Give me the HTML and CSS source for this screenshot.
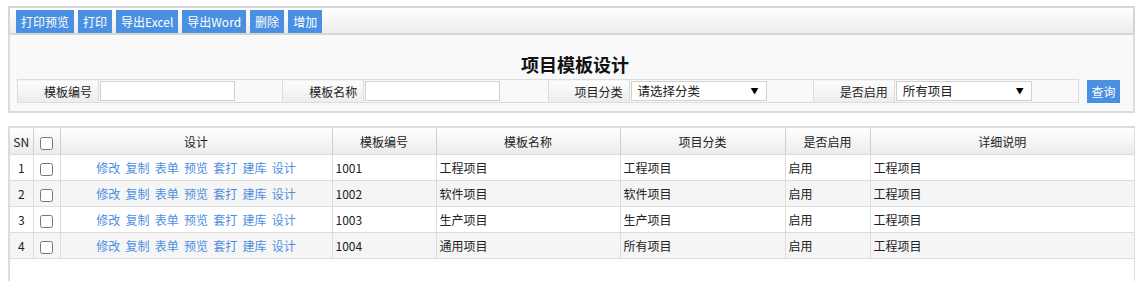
FILE: index.html
```html
<!DOCTYPE html>
<html lang="zh-CN">
<head>
  <meta charset="UTF-8" />
  <title>项目模板设计</title>
  <link rel="stylesheet" href="styles.css">
</head>
<body>

<div class="page">
  <div class="toolbar">
    <button class="tbtn">打印预览</button>
    <button class="tbtn">打印</button>
    <button class="tbtn">导出Excel</button>
    <button class="tbtn">导出Word</button>
    <button class="tbtn">删除</button>
    <button class="tbtn">增加</button>
  </div>

  <div class="search-panel">
    <h1 class="title">项目模板设计</h1>
    <div class="search-row">
      <table class="search-table">
        <tr>
          <td class="lbl">模板编号</td>
          <td class="val"><input type="text" class="txt"></td>
          <td class="lbl">模板名称</td>
          <td class="val"><input type="text" class="txt"></td>
          <td class="lbl">项目分类</td>
          <td class="val"><span class="sel">请选择分类</span></td>
          <td class="lbl">是否启用</td>
          <td class="val"><span class="sel">所有项目</span></td>
        </tr>
      </table>
      <button class="qbtn">查询</button>
    </div>
  </div>

  <div class="grid">
    <table class="grid-table">
      <colgroup>
        <col style="width:23px">
        <col style="width:27px">
        <col style="width:272px">
        <col style="width:104px">
        <col style="width:184px">
        <col style="width:165px">
        <col style="width:85px">
        <col>
      </colgroup>
      <thead>
        <tr>
          <th>SN</th>
          <th><input type="checkbox"></th>
          <th>设计</th>
          <th>模板编号</th>
          <th>模板名称</th>
          <th>项目分类</th>
          <th>是否启用</th>
          <th>详细说明</th>
        </tr>
      </thead>
      <tbody id="rows"></tbody>
    </table>
  </div>
</div>

<script>
  const rows = [
    { no: "1001", name: "工程项目", type: "工程项目", on: "启用", desc: "工程项目" },
    { no: "1002", name: "软件项目", type: "软件项目", on: "启用", desc: "工程项目" },
    { no: "1003", name: "生产项目", type: "生产项目", on: "启用", desc: "工程项目" },
    { no: "1004", name: "通用项目", type: "所有项目", on: "启用", desc: "工程项目" }
  ];
  const actions = ["修改", "复制", "表单", "预览", "套打", "建库", "设计"];

  const tbody = document.getElementById("rows");
  rows.forEach((r, i) => {
    const tr = document.createElement("tr");
    const links = actions.map(a => `<a href="#">${a}</a>`).join(" ");
    tr.innerHTML = `<td class="sn">${i + 1}</td>
      <td class="ck"><input type="checkbox"></td>
      <td class="ops">${links}</td>
      <td>${r.no}</td><td>${r.name}</td><td>${r.type}</td>
      <td>${r.on}</td><td>${r.desc}</td>`;
    tbody.appendChild(tr);
  });
</script>

</body>
</html>
```

FILE: styles.css
```css
body {
  margin: 0;
  font-family: "Noto Sans CJK SC", "Liberation Sans", sans-serif;
  font-size: 12px;
  color: #222;
  background: #fff;
}

.page {
  margin: 6px 0 0 8px;
  width: 1127px;
}

.toolbar {
  display: flex;
  gap: 4px;
  padding: 2px 6px 0;
  border: 2px solid #d6d6d6;
  background: linear-gradient(#ffffff, #ececec);
}

.tbtn {
  height: 23px;
  padding: 0 5px;
  border: none;
  background: #4a90e2;
  color: #fff;
  font-family: inherit;
  font-size: 12px;
  line-height: 23px;
}

.search-panel {
  border: 2px solid #dcdcdc;
  border-top: none;
  background: #f9f9f9;
  padding: 17px 0 8px 7px;
}

.title {
  margin: 0 0 3px;
  text-align: center;
  font-size: 18px;
  line-height: 24px;
  font-weight: bold;
  color: #111;
}

.search-row {
  display: flex;
  align-items: center;
  gap: 8px;
}

.search-table {
  width: 1062px;
  border-collapse: collapse;
  table-layout: fixed;
}

.search-table td {
  height: 22px;
  border: 1px solid #dcdcdc;
  padding: 0;
}

.lbl {
  width: 74px;
  padding-right: 6px !important;
  text-align: right;
  background: linear-gradient(#fdfdfd, #ececec);
  color: #222;
}

.val {
  padding-left: 1px !important;
}

.txt {
  box-sizing: border-box;
  width: 135px;
  height: 20px;
  margin: 0;
  border: 1px solid #d0d0d0;
  background: #fff;
  vertical-align: middle;
}

.sel {
  position: relative;
  display: inline-block;
  box-sizing: border-box;
  width: 136px;
  height: 20px;
  padding-left: 6px;
  border: 1px solid #d0d0d0;
  background: #fff;
  font-size: 12.5px;
  line-height: 18px;
  vertical-align: middle;
}

.sel::after {
  content: "▼";
  position: absolute;
  right: 7px;
  top: 0;
  font-size: 8px;
  color: #000;
}

.qbtn {
  width: 33px;
  height: 23px;
  padding: 0;
  border: none;
  background: #4a90e2;
  color: #fff;
  font-family: inherit;
  font-size: 12px;
}

.grid {
  margin-top: 13px;
  border: 2px solid #dcdcdc;
  border-right-width: 1px;
  min-height: 160px;
}

.grid-table {
  width: 100%;
  border-collapse: collapse;
  table-layout: fixed;
}

.grid-table th {
  height: 26px;
  padding: 0;
  font-weight: normal;
  color: #222;
  background: linear-gradient(#ffffff, #ebebeb);
  border-left: 1px solid #cfcfcf;
  border-bottom: 1px solid #dcdcdc;
}

.grid-table th:first-child {
  border-left: none;
}

.grid-table td {
  height: 25px;
  padding: 0 0 0 3px;
  border: 1px solid #dcdcdc;
  border-top: none;
  white-space: nowrap;
}

.grid-table td:first-child {
  border-left: none;
}

.grid-table td:last-child {
  border-right: none;
}

.grid-table tbody tr:nth-child(even) td {
  background: #f5f5f5;
}

.grid-table td.sn,
.grid-table td.ck {
  padding: 0;
  text-align: center;
}

.grid-table td.ops {
  padding: 0;
  text-align: center;
  word-spacing: 2.5px;
}

.ops a {
  color: #4d8fdf;
  text-decoration: none;
}

input[type="checkbox"] {
  margin: 0;
  vertical-align: middle;
}
```
